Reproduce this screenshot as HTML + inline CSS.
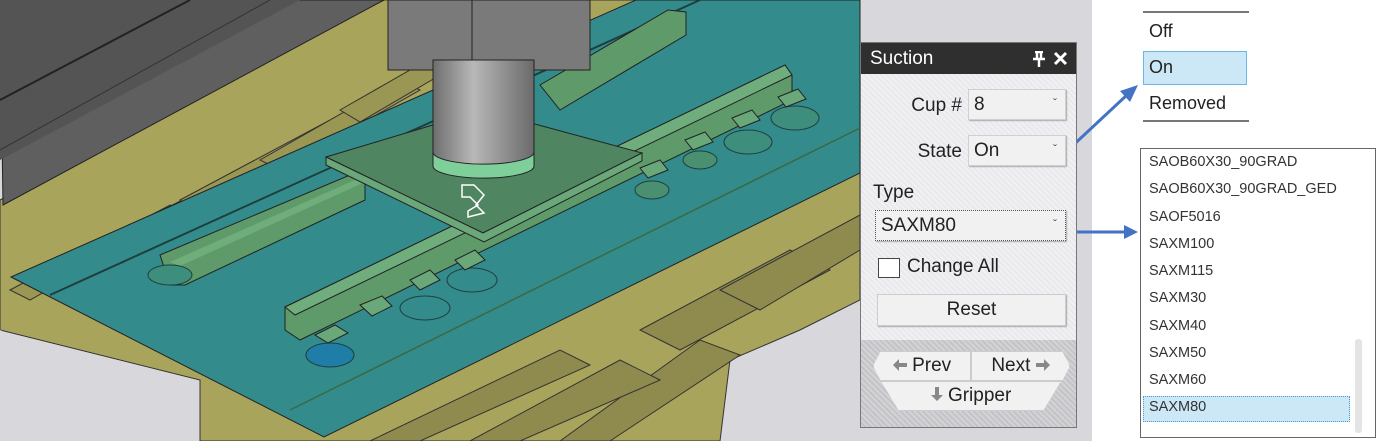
<!DOCTYPE html>
<html><head><style>
html,body{margin:0;padding:0;background:#fff;}
body{width:1377px;height:441px;position:relative;overflow:hidden;font-family:"Segoe UI","Liberation Sans",sans-serif;}
.abs{position:absolute;}
.panel{left:860px;top:42px;width:217px;height:386px;background:#e9e9ed;border:1px solid #777;box-sizing:border-box;
 background-image:repeating-linear-gradient(45deg,rgba(255,255,255,.35) 0 2px,rgba(0,0,0,0) 2px 4px);}
.title{left:0;top:0;width:215px;height:31px;background:#2f2f2f;color:#fff;font-size:19px;line-height:31px;padding-left:9px;box-sizing:border-box;}
.lbl{font-size:19px;color:#222;}
.combo{background:#f1f1f1;border:1px solid #d0d0d0;box-shadow:1px 1px 1px #aaa;font-size:19px;color:#222;height:31px;line-height:30px;box-sizing:border-box;padding-left:5px;}
.combo .ar{position:absolute;right:8px;top:-2px;font-size:12px;color:#555;}
.btn{background:#f1f1f1;border:1px solid #ccc;box-shadow:1px 1px 1px #aaa;font-size:19px;text-align:center;color:#222;}
.list{font-size:18px;color:#222;}
.it{position:absolute;left:8px;font-size:14.5px;color:#333;}
</style></head><body>
<svg class="abs" style="left:0;top:0" width="1377" height="441" viewBox="0 0 1377 441">
<defs><linearGradient id="cg" x1="0" x2="1"><stop offset="0" stop-color="#6e6e6e"/><stop offset=".4" stop-color="#b8b8b8"/><stop offset="1" stop-color="#6a6a6a"/></linearGradient></defs>
<rect x="0" y="0" width="1092" height="441" fill="#d8d8dc"/>
<!-- yellow pallet -->
<polygon points="0,200 384,0 860,0 860,300 800,330 730,360 720,441 330,441 200,441 200,380 0,330" fill="#a9a45c" stroke="#333" stroke-width="1"/>
<polygon points="0,330 0,441 140,441 140,395 110,380" fill="#d8d8dc"/>
<g stroke="#333" stroke-width="1" fill="#9a9654">
<polygon points="10,290 170,205 190,210 30,300"/>
<polygon points="95,245 250,165 270,172 115,257"/>
<polygon points="180,200 330,120 350,128 200,212"/>
<polygon points="260,160 400,80 420,90 280,170"/>
<polygon points="340,110 480,30 500,40 360,122"/>
</g>
<g stroke="#333" fill="#8f8b4e">
<polygon points="560,441 700,340 740,355 610,441"/>
<polygon points="470,441 620,360 660,380 520,441"/>
<polygon points="640,330 790,250 830,270 680,350"/>
<polygon points="720,290 860,215 860,250 760,310"/>
<polygon points="370,441 560,350 590,365 420,441"/>
</g>
<!-- machine -->
<polygon points="0,0 384,0 3,205" fill="#5f5f5f" stroke="#222"/>
<polygon points="0,0 300,0 0,160" fill="#545454"/>
<line x1="0" y1="100" x2="190" y2="0" stroke="#222" stroke-width="2"/>
<line x1="0" y1="150" x2="270" y2="0" stroke="#333" stroke-width="1"/>
<!-- teal sheet -->
<polygon points="11,277 636,0 860,0 860,173 324,437" fill="#348b8b" stroke="#222"/>
<line x1="50" y1="295" x2="700" y2="0" stroke="#1f3f3f" stroke-width="2"/>
<line x1="290" y1="410" x2="860" y2="128" stroke="#3a6a40" stroke-width="1.5"/>
<!-- back bar -->
<polygon points="540,85 668,10 686,12 686,35 560,110" fill="#5e9a6a" stroke="#222"/>
<!-- left bar -->
<polygon points="160,255 350,175 365,180 365,200 185,285 170,285" fill="#5e9a6a" stroke="#222"/>
<polygon points="170,262 355,180 365,182 180,266" fill="#6fae7b"/>
<!-- front bar -->
<polygon points="285,307 785,65 792,75 792,100 300,340 285,330" fill="#5e9a6a" stroke="#222"/>
<polygon points="285,307 785,65 792,75 295,315" fill="#70ad7c" stroke="#222"/>
<!-- cups -->
<g stroke="#1f3f3f" fill="#3e8e7e">
<ellipse cx="170" cy="275" rx="22" ry="10"/>
<ellipse cx="330" cy="355" rx="24" ry="12" fill="#1f7ea8"/>
<ellipse cx="425" cy="308" rx="25" ry="12" fill="#348b8b"/>
<ellipse cx="472" cy="280" rx="25" ry="12" fill="#348b8b"/>
<ellipse cx="652" cy="190" rx="17" ry="9" fill="#4a9070"/>
<ellipse cx="700" cy="160" rx="17" ry="9" fill="#4a9070"/>
<ellipse cx="748" cy="142" rx="24" ry="12"/>
<ellipse cx="795" cy="118" rx="24" ry="12"/>
</g>
<g fill="#6aa879" stroke="#222">
<polygon points="315,335 335,325 348,333 328,343"/>
<polygon points="360,305 382,296 392,306 372,316"/>
<polygon points="410,280 430,270 440,280 420,290"/>
<polygon points="455,260 475,250 485,260 465,270"/>
<polygon points="640,168 660,160 668,170 648,178"/>
<polygon points="685,140 705,132 713,142 693,150"/>
<polygon points="732,118 752,110 760,120 740,128"/>
<polygon points="778,97 798,89 806,99 786,107"/>
</g>
<!-- plate -->
<polygon points="326,157 483,110 642,153 483,233" fill="#4f8560" stroke="#222"/>
<polygon points="326,157 483,233 642,153 642,161 484,242 326,165" fill="#6aa879" stroke="#222"/>
<!-- head -->
<rect x="388" y="0" width="202" height="70" fill="#7a7a7a" stroke="#222"/>
<line x1="472" y1="0" x2="472" y2="70" stroke="#222"/>
<rect x="433" y="60" width="101" height="105" fill="url(#cg)" stroke="#222"/>
<path d="M433,152 L433,166 A50,12 0 0 0 534,166 L534,152 A50,12 0 0 1 433,152 Z" fill="#7fcf9b" stroke="#222"/>
<path d="M462,185 l12,0 l10,10 l-8,10 l8,8 l-16,4 l0,-6 l10,-6 l-8,-8 l-8,0 z" fill="none" stroke="#fff" stroke-width="1.5"/>
<!-- arrows -->
<line x1="1068" y1="150" x2="1128" y2="94" stroke="#4472c4" stroke-width="3"/>
<polygon points="1138,85 1120,91 1130,102" fill="#4472c4"/>
<line x1="1070" y1="232" x2="1126" y2="232" stroke="#4472c4" stroke-width="3"/>
<polygon points="1138,232 1124,225 1124,239" fill="#4472c4"/>
</svg>
<div class="abs panel">
 <div class="abs title">Suction
  <svg class="abs" style="right:30px;top:8px" width="14" height="16" viewBox="0 0 14 16"><path d="M3,1 h8 M5,1 v7 M9,1 v7 M1,8 h12 M7,8 v8" stroke="#fff" stroke-width="2.5" fill="none"/></svg>
  <svg class="abs" style="right:8px;top:8px" width="15" height="15" viewBox="0 0 15 15"><path d="M2,2 L13,13 M13,2 L2,13" stroke="#fff" stroke-width="3"/></svg>
 </div>
 <div class="abs lbl" style="right:114px;top:52px">Cup #</div>
 <div class="abs combo" style="left:107px;top:46px;width:98px">8<span class="ar">&#711;</span></div>
 <div class="abs lbl" style="right:114px;top:98px">State</div>
 <div class="abs combo" style="left:107px;top:92px;width:98px">On<span class="ar">&#711;</span></div>
 <div class="abs lbl" style="left:12px;top:139px">Type</div>
 <div class="abs combo" style="left:14px;top:167px;width:191px;border:1px dotted #555">SAXM80<span class="ar">&#711;</span></div>
 <div class="abs" style="left:17px;top:215px;width:20px;height:18px;background:#fff;border:1px solid #444"></div>
 <div class="abs lbl" style="left:46px;top:213px">Change All</div>
 <div class="abs btn" style="left:16px;top:251px;width:187px;height:30px;line-height:30px">Reset</div>
 <div class="abs" style="left:0;top:297px;width:215px;height:87px;background:#c4c4c8;background-image:repeating-linear-gradient(45deg,rgba(255,255,255,.25) 0 2px,rgba(0,0,0,0) 2px 4px)"></div>
 <div class="abs btn" style="left:12px;top:308px;width:96px;height:28px;line-height:28px;clip-path:polygon(8% 0,100% 0,100% 100%,8% 100%,0 50%);box-shadow:none"><svg width="14" height="12" viewBox="0 0 14 12"><path d="M0,6 L6,0 V4 H14 V8 H6 V12 Z" fill="#888"/></svg> Prev</div>
 <div class="abs btn" style="left:110px;top:308px;width:97px;height:28px;line-height:28px;clip-path:polygon(0 0,92% 0,100% 50%,92% 100%,0 100%);box-shadow:none">Next <svg width="14" height="12" viewBox="0 0 14 12"><path d="M14,6 L8,0 V4 H0 V8 H8 V12 Z" fill="#888"/></svg></div>
 <div class="abs btn" style="left:20px;top:338px;width:178px;height:28px;line-height:28px;clip-path:polygon(0 0,100% 0,90% 100%,10% 100%);box-shadow:none"><svg width="12" height="14" viewBox="0 0 12 14"><path d="M6,14 L0,8 H4 V0 H8 V8 H12 Z" fill="#888"/></svg> Gripper</div>
</div>
<div class="abs" style="left:1143px;top:11px;width:106px;height:111px;border-top:2px solid #777;border-bottom:2px solid #777;box-sizing:border-box;background:#fff">
 <div class="abs list" style="left:6px;top:8px">Off</div>
 <div class="abs" style="left:0;top:38px;width:104px;height:34px;background:#cce8f6;border:1px solid #6ab6e6;box-sizing:border-box"></div>
 <div class="abs list" style="left:6px;top:44px">On</div>
 <div class="abs list" style="left:6px;top:80px">Removed</div>
</div>
<div class="abs" style="left:1140px;top:148px;width:236px;height:290px;border:1px solid #666;box-sizing:border-box;background:#fff">
 <div class="abs it" style="top:5px">SAOB60X30_90GRAD</div>
 <div class="abs it" style="top:32px">SAOB60X30_90GRAD_GED</div>
 <div class="abs it" style="top:60px">SAOF5016</div>
 <div class="abs it" style="top:87px">SAXM100</div>
 <div class="abs it" style="top:114px">SAXM115</div>
 <div class="abs it" style="top:141px">SAXM30</div>
 <div class="abs it" style="top:169px">SAXM40</div>
 <div class="abs it" style="top:196px">SAXM50</div>
 <div class="abs it" style="top:223px">SAXM60</div>
 <div class="abs" style="left:2px;top:247px;width:207px;height:26px;background:#cce8f6;border:1px dotted #4a9ad0;box-sizing:border-box"></div>
 <div class="abs it" style="top:250px">SAXM80</div>
 <div class="abs" style="left:214px;top:190px;width:7px;height:94px;background:#e4e4e4;border-radius:3px"></div>
</div>
</body></html>
